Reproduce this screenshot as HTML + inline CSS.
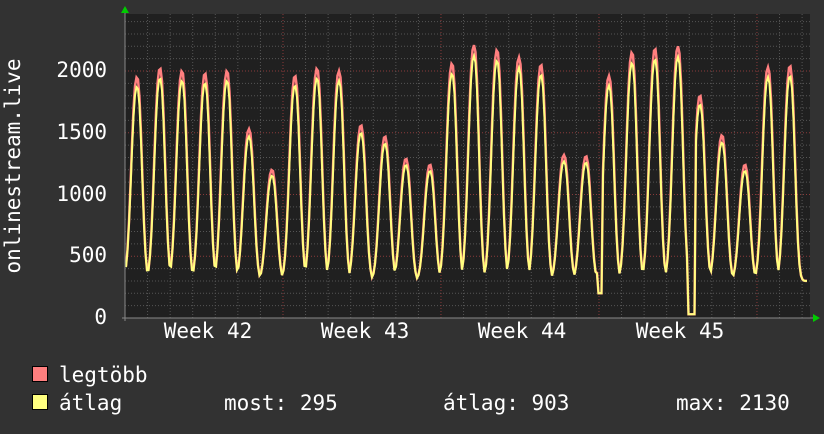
<!DOCTYPE html>
<html><head><meta charset="utf-8"><style>
html,body{margin:0;padding:0;background:#323232;}
body{width:824px;height:430px;overflow:hidden;position:relative;font-family:"DejaVu Sans Mono","Liberation Mono",monospace;color:#fff;}
svg text{font-family:"DejaVu Sans Mono","Liberation Mono",monospace;fill:#fff;font-size:21px;}
</style></head><body>
<svg id="g" width="824" height="430" xmlns="http://www.w3.org/2000/svg">
<rect x="0" y="0" width="824" height="430" fill="#323232"/>
<rect x="125" y="14" width="685" height="304" fill="#202020"/>
<g id="grid"></g>
<g id="data"></g>
<line x1="122" y1="318" x2="814" y2="318" stroke="#888" stroke-width="1"/>
<line x1="125" y1="10" x2="125" y2="321" stroke="#888" stroke-width="1"/>
<polygon points="121,13 129,13 125,6" fill="#00cc00"/>
<polygon points="813,314 813,322 820,318" fill="#00cc00"/>
<text x="107" y="77" text-anchor="end">2000</text>
<text x="107" y="139" text-anchor="end">1500</text>
<text x="107" y="201" text-anchor="end">1000</text>
<text x="107" y="262" text-anchor="end">500</text>
<text x="107" y="324" text-anchor="end">0</text>
<text transform="translate(20,166) rotate(-90)" text-anchor="middle">onlinestream.live</text>
<text x="208" y="338" text-anchor="middle">Week 42</text>
<text x="365" y="338" text-anchor="middle">Week 43</text>
<text x="522" y="338" text-anchor="middle">Week 44</text>
<text x="680" y="338" text-anchor="middle">Week 45</text>
<rect x="32.5" y="366.5" width="15" height="15" fill="#ff7f7f" stroke="#000"/>
<rect x="32.5" y="394.5" width="15" height="15" fill="#ffff7f" stroke="#000"/>
<text x="59" y="382">legtöbb</text>
<text x="59" y="410">átlag</text>
<text x="224" y="410">most: 295</text>
<text x="443" y="410">átlag: 903</text>
<text x="676" y="410">max: 2130</text>
</svg>
<script>
function Y(v){return 318-v*0.1235;}
var grid=document.getElementById("grid"),s="";
for(var v=100;v<=2400;v+=100){var y=Y(v);var maj=v%500==0;
s+='<line x1="125" x2="810" y1="'+y+'" y2="'+y+'" stroke="'+(maj?'#8a3a3a':'#555')+'" stroke-dasharray="1,2"/>';}
var d=22.57;
for(var i=1;i<31;i++){var x=125+i*d;var maj=(i%7==0);
s+='<line y1="14" y2="318" x1="'+x+'" x2="'+x+'" stroke="'+(maj?'#8a3a3a':'#555')+'" stroke-dasharray="1,2"/>';}
grid.innerHTML=s;
var peaks=[[137,1950],[160,2020],[182,2000],[205,1980],[227,2000],[249,1530],[272,1200],[295,1960],[317,2020],[339,2000],[361,1560],[385,1470],[406,1290],[430,1240],[452,2060],[474,2210],[497,2170],[519,2110],[541,2050],[564,1320],[586,1310],[609,1960],[632,2150],[655,2180],[678,2200],[700,1800],[722,1480],[745,1240],[768,2030],[790,2040]];
function val(x,scale){var t=0;for(var i=0;i<peaks.length;i++){var dx=x-peaks[i][0];var sg=dx<0?5.5:4.8;t=Math.max(t,(peaks[i][1]*scale-300)*Math.exp(-Math.pow(Math.abs(dx)/sg,2.4)/2));}
var v=300+t;if(x>687&&x<695)v=Math.min(v,30);if(x>597&&x<602)v=Math.min(v,200);return v;}
var pr="",py="";
for(var x=126;x<=807;x+=1.5){pr+=(pr?"L":"M")+x+","+Y(val(x,1)).toFixed(1);py+=(py?"L":"M")+x+","+Y(val(x,0.96)).toFixed(1);}
document.getElementById("data").innerHTML='<path d="'+pr+'" fill="none" stroke="#ff7f7f" stroke-width="2.5"/><path d="'+py+'" fill="none" stroke="#ffff7f" stroke-width="2"/>';
</script>
</body></html>
